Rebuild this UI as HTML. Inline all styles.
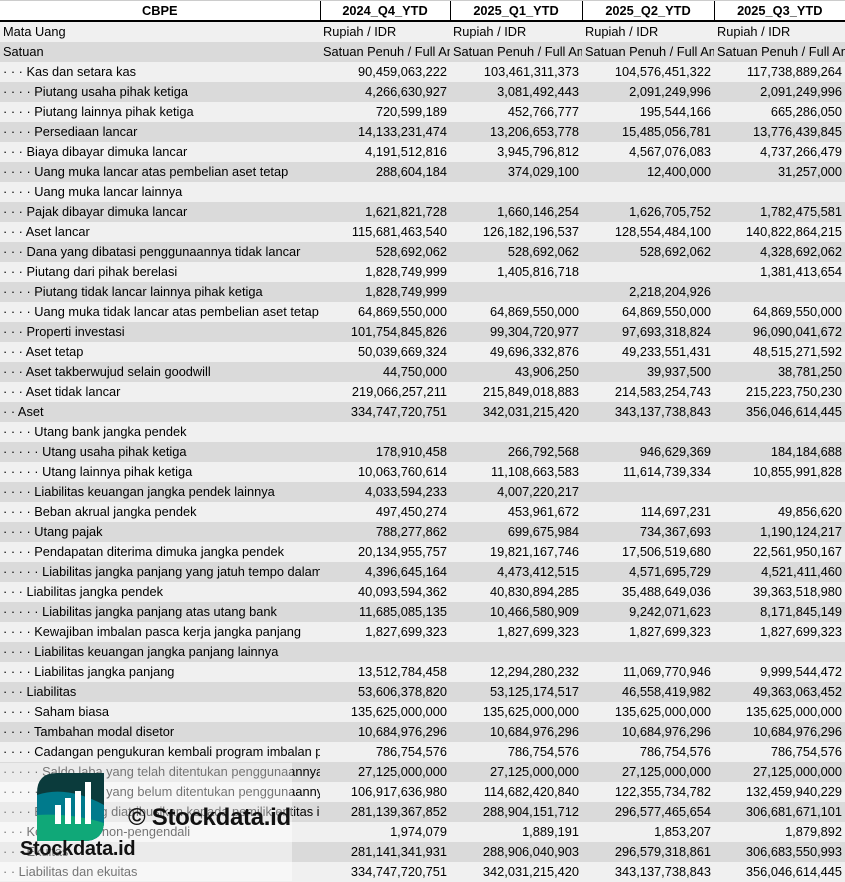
<!DOCTYPE html>
<html><head><meta charset="utf-8"><style>
body{margin:0;width:845px;height:881px;overflow:hidden;background:#fff;font-family:"Liberation Sans",sans-serif;font-size:12.8px;color:#000;position:relative}
table{border-collapse:collapse;table-layout:fixed;position:absolute;left:0;top:0;width:845px}
td{height:20px;max-height:20px;padding:0 3px;white-space:nowrap;overflow:hidden;text-overflow:clip;line-height:20px;box-sizing:border-box}
td.n{text-align:right}
tr:nth-child(even){background:#f0f0f0}
tr:nth-child(odd){background:#dadada}
tr.h{background:#fff}
tr.h td{font-weight:bold;text-align:center;border-bottom:2px solid #000;border-top:1px solid #ccc;border-left:1px solid #000;height:20px;line-height:17px}
tr.h td:first-child{border-left:none}
td.s{padding:0 0 0 3px}
.ov{position:absolute;left:0;top:763px;width:292px;height:118px;background:rgba(255,255,255,0.45)}
</style></head><body>
<table>
<colgroup><col style="width:320px"><col style="width:130px"><col style="width:132px"><col style="width:132px"><col style="width:131px"></colgroup>
<tr class="h"><td>CBPE</td><td>2024_Q4_YTD</td><td>2025_Q1_YTD</td><td>2025_Q2_YTD</td><td>2025_Q3_YTD</td></tr>
<tr><td>Mata Uang</td><td>Rupiah / IDR</td><td>Rupiah / IDR</td><td>Rupiah / IDR</td><td>Rupiah / IDR</td></tr>
<tr><td>Satuan</td><td class="s">Satuan Penuh / Full Amount</td><td class="s">Satuan Penuh / Full Amount</td><td class="s">Satuan Penuh / Full Amount</td><td class="s">Satuan Penuh / Full Amount</td></tr>
<tr><td>· · · Kas dan setara kas</td><td class="n">90,459,063,222</td><td class="n">103,461,311,373</td><td class="n">104,576,451,322</td><td class="n">117,738,889,264</td></tr>
<tr><td>· · · · Piutang usaha pihak ketiga</td><td class="n">4,266,630,927</td><td class="n">3,081,492,443</td><td class="n">2,091,249,996</td><td class="n">2,091,249,996</td></tr>
<tr><td>· · · · Piutang lainnya pihak ketiga</td><td class="n">720,599,189</td><td class="n">452,766,777</td><td class="n">195,544,166</td><td class="n">665,286,050</td></tr>
<tr><td>· · · · Persediaan lancar</td><td class="n">14,133,231,474</td><td class="n">13,206,653,778</td><td class="n">15,485,056,781</td><td class="n">13,776,439,845</td></tr>
<tr><td>· · · Biaya dibayar dimuka lancar</td><td class="n">4,191,512,816</td><td class="n">3,945,796,812</td><td class="n">4,567,076,083</td><td class="n">4,737,266,479</td></tr>
<tr><td>· · · · Uang muka lancar atas pembelian aset tetap</td><td class="n">288,604,184</td><td class="n">374,029,100</td><td class="n">12,400,000</td><td class="n">31,257,000</td></tr>
<tr><td>· · · · Uang muka lancar lainnya</td><td></td><td></td><td></td><td></td></tr>
<tr><td>· · · Pajak dibayar dimuka lancar</td><td class="n">1,621,821,728</td><td class="n">1,660,146,254</td><td class="n">1,626,705,752</td><td class="n">1,782,475,581</td></tr>
<tr><td>· · · Aset lancar</td><td class="n">115,681,463,540</td><td class="n">126,182,196,537</td><td class="n">128,554,484,100</td><td class="n">140,822,864,215</td></tr>
<tr><td>· · · Dana yang dibatasi penggunaannya tidak lancar</td><td class="n">528,692,062</td><td class="n">528,692,062</td><td class="n">528,692,062</td><td class="n">4,328,692,062</td></tr>
<tr><td>· · · Piutang dari pihak berelasi</td><td class="n">1,828,749,999</td><td class="n">1,405,816,718</td><td></td><td class="n">1,381,413,654</td></tr>
<tr><td>· · · · Piutang tidak lancar lainnya pihak ketiga</td><td class="n">1,828,749,999</td><td></td><td class="n">2,218,204,926</td><td></td></tr>
<tr><td>· · · · Uang muka tidak lancar atas pembelian aset tetap</td><td class="n">64,869,550,000</td><td class="n">64,869,550,000</td><td class="n">64,869,550,000</td><td class="n">64,869,550,000</td></tr>
<tr><td>· · · Properti investasi</td><td class="n">101,754,845,826</td><td class="n">99,304,720,977</td><td class="n">97,693,318,824</td><td class="n">96,090,041,672</td></tr>
<tr><td>· · · Aset tetap</td><td class="n">50,039,669,324</td><td class="n">49,696,332,876</td><td class="n">49,233,551,431</td><td class="n">48,515,271,592</td></tr>
<tr><td>· · · Aset takberwujud selain goodwill</td><td class="n">44,750,000</td><td class="n">43,906,250</td><td class="n">39,937,500</td><td class="n">38,781,250</td></tr>
<tr><td>· · · Aset tidak lancar</td><td class="n">219,066,257,211</td><td class="n">215,849,018,883</td><td class="n">214,583,254,743</td><td class="n">215,223,750,230</td></tr>
<tr><td>· · Aset</td><td class="n">334,747,720,751</td><td class="n">342,031,215,420</td><td class="n">343,137,738,843</td><td class="n">356,046,614,445</td></tr>
<tr><td>· · · · Utang bank jangka pendek</td><td></td><td></td><td></td><td></td></tr>
<tr><td>· · · · · Utang usaha pihak ketiga</td><td class="n">178,910,458</td><td class="n">266,792,568</td><td class="n">946,629,369</td><td class="n">184,184,688</td></tr>
<tr><td>· · · · · Utang lainnya pihak ketiga</td><td class="n">10,063,760,614</td><td class="n">11,108,663,583</td><td class="n">11,614,739,334</td><td class="n">10,855,991,828</td></tr>
<tr><td>· · · · Liabilitas keuangan jangka pendek lainnya</td><td class="n">4,033,594,233</td><td class="n">4,007,220,217</td><td></td><td></td></tr>
<tr><td>· · · · Beban akrual jangka pendek</td><td class="n">497,450,274</td><td class="n">453,961,672</td><td class="n">114,697,231</td><td class="n">49,856,620</td></tr>
<tr><td>· · · · Utang pajak</td><td class="n">788,277,862</td><td class="n">699,675,984</td><td class="n">734,367,693</td><td class="n">1,190,124,217</td></tr>
<tr><td>· · · · Pendapatan diterima dimuka jangka pendek</td><td class="n">20,134,955,757</td><td class="n">19,821,167,746</td><td class="n">17,506,519,680</td><td class="n">22,561,950,167</td></tr>
<tr><td>· · · · · Liabilitas jangka panjang yang jatuh tempo dalam satu tahun</td><td class="n">4,396,645,164</td><td class="n">4,473,412,515</td><td class="n">4,571,695,729</td><td class="n">4,521,411,460</td></tr>
<tr><td>· · · Liabilitas jangka pendek</td><td class="n">40,093,594,362</td><td class="n">40,830,894,285</td><td class="n">35,488,649,036</td><td class="n">39,363,518,980</td></tr>
<tr><td>· · · · · Liabilitas jangka panjang atas utang bank</td><td class="n">11,685,085,135</td><td class="n">10,466,580,909</td><td class="n">9,242,071,623</td><td class="n">8,171,845,149</td></tr>
<tr><td>· · · · Kewajiban imbalan pasca kerja jangka panjang</td><td class="n">1,827,699,323</td><td class="n">1,827,699,323</td><td class="n">1,827,699,323</td><td class="n">1,827,699,323</td></tr>
<tr><td>· · · · Liabilitas keuangan jangka panjang lainnya</td><td></td><td></td><td></td><td></td></tr>
<tr><td>· · · · Liabilitas jangka panjang</td><td class="n">13,512,784,458</td><td class="n">12,294,280,232</td><td class="n">11,069,770,946</td><td class="n">9,999,544,472</td></tr>
<tr><td>· · · Liabilitas</td><td class="n">53,606,378,820</td><td class="n">53,125,174,517</td><td class="n">46,558,419,982</td><td class="n">49,363,063,452</td></tr>
<tr><td>· · · · Saham biasa</td><td class="n">135,625,000,000</td><td class="n">135,625,000,000</td><td class="n">135,625,000,000</td><td class="n">135,625,000,000</td></tr>
<tr><td>· · · · Tambahan modal disetor</td><td class="n">10,684,976,296</td><td class="n">10,684,976,296</td><td class="n">10,684,976,296</td><td class="n">10,684,976,296</td></tr>
<tr><td>· · · · Cadangan pengukuran kembali program imbalan pasti</td><td class="n">786,754,576</td><td class="n">786,754,576</td><td class="n">786,754,576</td><td class="n">786,754,576</td></tr>
<tr><td>· · · · · Saldo laba yang telah ditentukan penggunaannya</td><td class="n">27,125,000,000</td><td class="n">27,125,000,000</td><td class="n">27,125,000,000</td><td class="n">27,125,000,000</td></tr>
<tr><td>· · · · · Saldo laba yang belum ditentukan penggunaannya</td><td class="n">106,917,636,980</td><td class="n">114,682,420,840</td><td class="n">122,355,734,782</td><td class="n">132,459,940,229</td></tr>
<tr><td>· · · · Ekuitas yang diatribusikan kepada pemilik entitas induk</td><td class="n">281,139,367,852</td><td class="n">288,904,151,712</td><td class="n">296,577,465,654</td><td class="n">306,681,671,101</td></tr>
<tr><td>· · · Kepentingan non-pengendali</td><td class="n">1,974,079</td><td class="n">1,889,191</td><td class="n">1,853,207</td><td class="n">1,879,892</td></tr>
<tr><td>· · · Ekuitas</td><td class="n">281,141,341,931</td><td class="n">288,906,040,903</td><td class="n">296,579,318,861</td><td class="n">306,683,550,993</td></tr>
<tr><td>· · Liabilitas dan ekuitas</td><td class="n">334,747,720,751</td><td class="n">342,031,215,420</td><td class="n">343,137,738,843</td><td class="n">356,046,614,445</td></tr>
</table>
<div class="ov"></div>
<svg style="position:absolute;left:37px;top:773px" width="67" height="68" viewBox="0 0 67 68">
<defs><clipPath id="c"><path d="M0 20 Q0 0 20 0 L67 0 L67 48 Q67 68 47 68 L0 68 Z"/></clipPath></defs>
<g clip-path="url(#c)">
<rect width="67" height="68" fill="#0b3b3c"/>
<path d="M0 22 Q30 12 67 32 L67 68 L0 68Z" fill="#007a8c"/>
<path d="M0 42 Q35 40 67 50 L67 68 L0 68Z" fill="#10a878"/>
</g>
<rect x="18" y="32" width="6" height="19" fill="#fff"/>
<rect x="28" y="25" width="6" height="26" fill="#fff"/>
<rect x="38" y="18" width="6" height="33" fill="#fff"/>
<rect x="48" y="9" width="6" height="42" fill="#fff"/>
</svg>
<div style="position:absolute;left:128px;top:804px;font-weight:bold;font-size:24px;color:#111;letter-spacing:-0.3px">© Stockdata.id</div>
<div style="position:absolute;left:20px;top:838px;font-weight:bold;font-size:20px;color:#111;letter-spacing:-0.3px">Stockdata.id</div>
</body></html>
